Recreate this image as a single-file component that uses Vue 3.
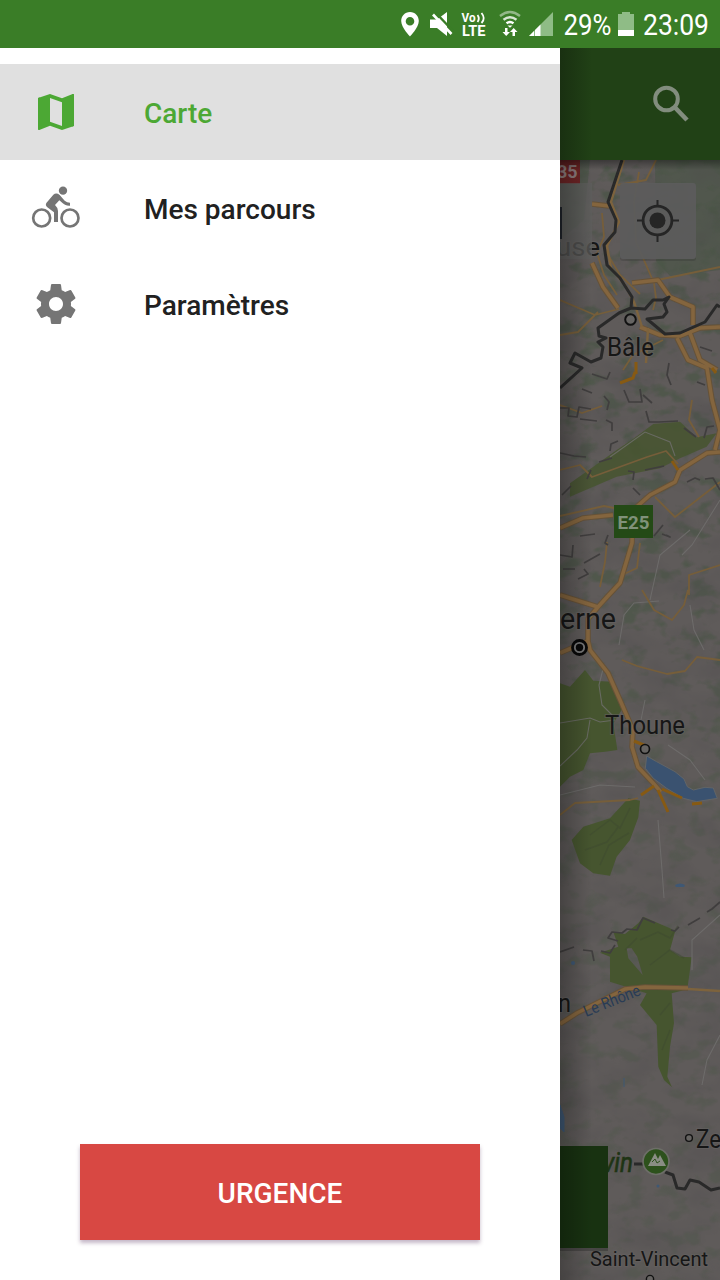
<script setup>
const items = [
  { id: 'map', label: 'Carte', active: true },
  { id: 'bike', label: 'Mes parcours', active: false },
  { id: 'settings', label: 'Paramètres', active: false },
]
</script>

<template>
  <div class="screen">
    <header class="status">
      <svg width="330" height="48" viewBox="390 0 330 48">
        <path fill="#fff" fill-rule="evenodd" d="M410 12c-5.200 0-8.800 4-8.800 9 0 6.500 8.800 15.500 8.800 15.500s8.800-9 8.800-15.500c0-5-3.600-9-8.800-9zm0 5a4.300 4.300 0 1 1 0 8.600 4.300 4.300 0 0 1 0-8.600z" />
        <path fill="#fff" d="M430 19.500h7L447 12v24l-10-8h-7z" />
        <path stroke="#3a7d27" stroke-width="2.400" d="M435.500 12.500l18 19" />
        <path stroke="#fff" stroke-width="2.600" d="M433 14.500l18.500 19.500" />
        <g fill="#fff" font-family="Roboto, sans-serif" font-weight="700">
          <text x="461.500" y="22" font-size="12.500" textLength="14" lengthAdjust="spacingAndGlyphs">Vo</text>
          <text x="462" y="36" font-size="14" textLength="23.500" lengthAdjust="spacingAndGlyphs">LTE</text>
        </g>
        <path fill="none" stroke="#fff" stroke-width="1.800" d="M477.500 15q2.500 3.500 0 7M481.500 13q4.500 5.500 0 10" />
        <g fill="none" stroke="#fff" stroke-width="2.400">
          <path stroke-opacity=".45" d="M500 16q10-8 20 0" />
          <path stroke-opacity=".8" d="M503.500 19.700q6.500-5 13 0" />
          <path d="M506.500 23.200q3.500-2.600 7 0" />
        </g>
        <path fill="#fff" d="M507.500 25.500h5l-2.500 2.300zM505 28h2.500v4h2.500l-3.800 4-3.700-4h2.500zM512.500 36h2.500v-4h2.500l-3.800-4-3.700 4h2.500z" />
        <path fill="#8fbc86" d="M553 12v24h-24z" />
        <path fill="#fff" d="M529 36l5-5v5zM535 30l5.500-5.500V36H535z" />
        <g fill="#fff" font-family="Roboto, sans-serif">
          <text x="563.500" y="35" font-size="29.500" textLength="48" lengthAdjust="spacingAndGlyphs">29%</text>
          <text x="643" y="35" font-size="29.500" textLength="66" lengthAdjust="spacingAndGlyphs">23:09</text>
        </g>
        <path fill="#8fbc86" d="M618 14h4v-2h8v2h4v16h-16z" />
        <path fill="#fff" d="M618 30h16v6h-16z" />
      </svg>
    </header>

    <div class="body">
      <nav class="drawer">
        <ul class="menu">
          <li v-for="item in items" :key="item.id" class="row" :class="{ active: item.active }">
            <span class="icon">
              <svg v-if="item.id === 'map'" width="48" height="48" viewBox="0 0 24 24">
                <path fill="currentColor" d="M20.500 3l-.16.030L15 5.100 9 3 3.360 4.900c-.21.070-.36.250-.36.480V20.500l.5.500.16-.030L9 18.900l6 2.100 5.640-1.900c.21-.070.360-.250.360-.480V3.500l-.5-.5zM15 19l-6-2.110V5l6 2.110V19z" />
                <path fill="currentColor" d="M3 5l1-.3V20.500l-1 .5zM20 3.300l1-.3v16l-1 .3z" />
              </svg>
              <svg v-else-if="item.id === 'bike'" class="bike" width="52" height="46" viewBox="90 405 156 138">
                <g fill="none" stroke="currentColor" stroke-width="8">
                  <circle cx="125" cy="504" r="25.500" />
                  <circle cx="210" cy="504" r="25.500" />
                </g>
                <circle cx="189" cy="422" r="12.500" fill="currentColor" />
                <path fill="currentColor" d="M139 459L160 434Q169 427 179 435L194 452Q201 458 210 458V467Q195 468 184 456L178 451 165 465 172 474 174 483V516H162V487L142 472Q135 466 139 459z" />
              </svg>
              <svg v-else width="48" height="48" viewBox="0 0 24 24">
                <path fill="currentColor" d="M19.430 12.980c.040-.32.070-.64.070-.98s-.030-.66-.070-.98l2.110-1.650c.19-.15.240-.42.120-.64l-2-3.460c-.12-.22-.39-.3-.61-.22l-2.490 1c-.52-.4-1.080-.73-1.690-.98l-.38-2.650C14.460 2.180 14.250 2 14 2h-4c-.25 0-.46.180-.49.420l-.38 2.650c-.61.250-1.170.590-1.690.980l-2.490-1c-.23-.090-.49 0-.61.220l-2 3.460c-.13.220-.070.490.120.640l2.110 1.650c-.040.320-.070.650-.070.980s.030.660.070.980l-2.110 1.650c-.19.150-.24.420-.12.640l2 3.460c.12.220.39.300.61.220l2.490-1c.52.400 1.080.730 1.690.980l.38 2.650c.030.240.240.420.490.420h4c.25 0 .46-.18.490-.42l.38-2.650c.61-.25 1.170-.59 1.690-.98l2.490 1c.23.090.49 0 .61-.22l2-3.460c.12-.22.070-.49-.12-.64l-2.110-1.650zM12 15.500c-1.930 0-3.500-1.570-3.500-3.500s1.570-3.500 3.500-3.500 3.500 1.570 3.500 3.500-1.570 3.500-3.500 3.500z" />
              </svg>
            </span>
            <span class="label">{{ item.label }}</span>
          </li>
        </ul>
        <button class="urgent">URGENCE</button>
      </nav>

      <main class="app">
        <div class="toolbar">
          <svg width="48" height="48" viewBox="0 0 48 48">
            <circle cx="19.500" cy="19" r="11.300" fill="none" stroke="#828d7e" stroke-width="4" />
            <path stroke="#828d7e" stroke-width="4.600" d="M27.500 27L40 40" />
          </svg>
        </div>
        <svg class="map" width="160" height="1120" viewBox="560 160 160 1120">
          <defs>
            <filter id="veg" x="0" y="0" width="1" height="1" color-interpolation-filters="sRGB">
              <feTurbulence type="fractalNoise" baseFrequency=".045 .065" numOctaves="3" seed="8" />
              <feColorMatrix values="0 0 0 0 .29  0 0 0 0 .335  0 0 0 0 .275  5 0 0 0 -2.600" />
            </filter>
            <filter id="relief" x="0" y="0" width="1" height="1" color-interpolation-filters="sRGB">
              <feTurbulence type="fractalNoise" baseFrequency=".022 .035" numOctaves="3" seed="21" />
              <feColorMatrix values="0 0 0 0 .3  0 0 0 0 .29  0 0 0 0 .3  0 3 0 0 -1.300" />
            </filter>
            <linearGradient id="edge"><stop offset="0" stop-opacity=".26" /><stop offset="1" stop-opacity="0" /></linearGradient>
            <linearGradient id="barShade" x2="0" y2="1"><stop offset="0" stop-opacity=".35" /><stop offset="1" stop-opacity="0" /></linearGradient>
            <linearGradient id="fade" x1="0" x2="0" y1="0" y2="1"><stop offset="0" stop-color="#fff" stop-opacity=".75" /><stop offset=".42" stop-color="#fff" stop-opacity=".7" /><stop offset=".58" stop-color="#fff" stop-opacity=".4" /><stop offset="1" stop-color="#fff" stop-opacity=".35" /></linearGradient>
            <mask id="vegMask" maskUnits="userSpaceOnUse" x="560" y="160" width="160" height="1120"><rect x="560" y="160" width="160" height="1120" fill="url(#fade)" /></mask>
          </defs>

          <rect x="560" y="160" width="160" height="1120" fill="#5f5b5a" />
          <path fill="#4c5649" d="M655 160h65v110l-50 6-14-15zM560 160h30l-6 60-24 20z" opacity=".75" />
          <g mask="url(#vegMask)"><rect x="560" y="160" width="160" height="1120" filter="url(#veg)" /></g>
          <rect x="560" y="160" width="160" height="1120" filter="url(#relief)" opacity=".25" />

          <!-- parks and lake -->
          <g fill="#46552f">
            <path transform="translate(550 400) scale(.3333)" opacity=".85" d="M60 250L130 200 200 150 245 120 310 72 390 65 440 112 500 100 470 140 390 175 330 205 200 230 60 290z" />
            <path transform="translate(550 590) scale(.3333)" d="M30 280L60 290 105 240 130 272 185 275 215 360 190 400 202 480 165 485 120 490 100 540 60 560 30 590z" />
            <path transform="translate(550 730) scale(.3333)" d="M235 205L270 212 265 262 240 330 200 380 180 437 130 430 90 400 65 330 100 290 180 265z" />
            <path transform="translate(550 900) scale(.3333)" fill-rule="evenodd" d="M190 95L225 102 265 70 280 50 325 70 360 85 375 95 360 150 390 170 425 172 412 268 365 280 372 370 360 440 352 530 366 562 342 540 325 500 320 375 270 315 290 280 180 245 180 170 150 158 205 140zM230 145L235 175 278 225 262 170 245 145z" />
          </g>
          <g fill="none" stroke="#3e492f" stroke-width="1.500" opacity=".5">
            <path d="M590 835l20-15 10 8 10-20M585 850l22-8 12-16M600 865l9-20 20-12M640 940l18-8 12 6 8-12M650 965l20-15 14 8M625 950l12-12M660 1015l10-12M662 1050l8-20" />
          </g>
          <path transform="translate(550 730) scale(.3333)" fill="#3a5270" stroke="#616466" stroke-width="3" d="M290 78L320 95 375 125 402 147 412 170 430 180 465 172 490 174 502 205 440 215 400 205 350 175 310 145 286 115z" />
          <g fill="#3f5874"><path d="M675 885q5-3 10 0l-1 2h-8z" /><path d="M560 1105l4 12v15l-4-4zM624 1078v9" stroke="#3f5874" /><circle cx="573" cy="963" r="2" /><circle cx="658" cy="1186" r="1.500" /></g>

          <!-- local roads -->
          <g fill="none" stroke="#706f6e" stroke-width="1.100" opacity=".8">
            <path d="M604 665l-5 20 3 20 12 12M560 723l30-5 10 4 15-2M590 720l-3 18-10 12-17 16M619 645l5-30 10-12 25-2M645 700l-4 20M610 457l35-25 25 10 5 14M690 530l-30 25-10 45M560 795l40-10 35 2M658 820l4 50 2 28M692 970v-30l28-25M720 1035l-13 25-5 25M690 605l4 25 10 20M720 500l-28 45-10 10M705 780l-15-20-22-15" />
          </g>
          <g fill="none" stroke="#765e3a" stroke-width="1.800" stroke-linejoin="round">
            <path d="M602 213l2 24-7 16 7 22 13 20M639 172l-5 30 2 40 18 41 2 15-3 12M656 160l-10 20-28 5M648 282l72-15M560 300l35 15 24-6M598 312l-20 20-18 3M663 340l-30 15-10 15" />
            <path d="M560 470l20-5 12 12 55-20 19-6 12 13M560 516l44-10 20 4M607 542l-2 20-5 25M655 497l20 20 45-35M640 543l-3 25-15 7M689 595v-20l31-10M642 590l12 20 18 10 12-15 4-15M622 660l15 6 30 8 18-3 12-14 23 3M560 815l15-12 55-3 8-2M560 405l22 8 20-7M605 250l15 25 20 19M692 400l-3 20 10 17" />
          </g>

          <!-- motorways -->
          <g v-for="pass in 2" :key="pass" fill="none" :stroke="pass === 1 ? '#665238' : '#84653e'" :stroke-width="pass === 1 ? 5.600 : 3.600" stroke-linejoin="round">
            <path d="M592 263l11 24 15 21M632 283l26-3 12 17 23 10v18M640 327l20 8 20 1 20-8 20-1M677 338l11 22 19 8 5 32 8 30-5 20M690 333l10 27 17 10M592 204l17 2" />
            <path d="M720 452l-13 1-27 17-5 12-25 13-17 15-1 33-9 30-3 10-13 14-9 10-38-12M598 607l-10 12v28M560 528l23-10 30-3M560 653l28-12 2 9 18 23 12 27 13 30-1 17 6 20 15 16 8 9" />
            <path d="M560 1024l17-11 48-24 20-2 43 1" />
          </g>
          <g fill="none" stroke="#7d633d" stroke-width="2.400">
            <path d="M624 160l-13 42 8 20-12 24 4 22 14 17 9 17 8 25M648 328l-2 35" />
            <path d="M688 989l32 2" />
          </g>
          <path fill="none" stroke="#875a13" stroke-width="3" d="M636 362v12M620 383l13-5 2-6M672 461l6 9M658 790l10 22M662 789l20 9M641 795l13-9M692 804l10-1M634 741l12 5M712 368l4 5" />

          <!-- cantonal and national borders -->
          <g fill="none" stroke="#403e3e" stroke-width="1.700" stroke-linejoin="round">
            <path d="M560 408h9l-1 8 9 1 2-10 12 2M607 410l2-8-5-6M580 419l17 2M606 420l6 3v8M646 411l3 11 10 0 19-1M684 428l12 9M704 438l3-11 7-1M560 453l14 3 12 1M599 462l13-4M587 479l4-9M562 495l9-9M610 451l1-7 7-3M633 488l7 7M628 471l6 1-1 8M645 470l19-4M687 482l8-4 5 2M705 479l8-1 7 12M580 536l15-2M608 535l-3 8 3 2M560 555l12 2 1-12M584 563l16-9M563 569l12 0M578 579l10-5-4-5M654 536l9-11M662 534l8 3-4-2" />
            <path d="M592 374l15 5 3-7M624 390l5 12h13l-2-13M669 363l-2 12 4 10M582 389l10 4M700 347l12 4M643 395l9 8M697 382l8 3" />
            <path d="M560 952l14-5M583 950l9 1 2 10M601 951l9 2 5-8M618 941l-10-3 4-6 10 1 5-4 10 1 6-12 12 5M671 930l4 1 4-4M688 925l12-7M707 912l5-3 8-7" />
          </g>
          <g fill="none" stroke="#292929" stroke-width="3" stroke-linejoin="round">
            <path d="M622 160l-14 42 8 18-1 12-11 13 3 20 13 13 12 19-1 11 14 1 8-9h10l6-3-5 7 3 8-4 5-16 2 18 15 15-1 25-11 12-17 3 2M631 308l-12 5-21 15 1 8 7 2-8 4 5 5-2 11-10 4-16-9-5 10 12 5-22 20" />
            <path d="M634 1164h9M665 1172l8 3 4 13 8 1 5-9 9 2 12 8 9-2" />
          </g>

          <!-- shields -->
          <path fill="#6c2425" d="M560 160h20v24h-20z" />
          <text x="557" y="178" font-size="18" font-weight="700" fill="#8c7b7b">35</text>
          <path fill="#244a16" d="M614 505h39v33h-39z" />
          <text x="617.500" y="528.500" font-size="18.500" font-weight="700" fill="#80927a" textLength="32" lengthAdjust="spacingAndGlyphs">E25</text>

          <!-- place names -->
          <g class="places" fill="#161616" stroke="#676463" stroke-opacity=".55" stroke-width="2" paint-order="stroke">
            <text x="556" y="256" font-size="26" textLength="44" lengthAdjust="spacingAndGlyphs">use</text>
            <text x="607" y="356" font-size="26" textLength="47" lengthAdjust="spacingAndGlyphs">Bâle</text>
            <text x="560" y="629" font-size="29" textLength="56" lengthAdjust="spacingAndGlyphs">erne</text>
            <text x="605" y="734" font-size="26" textLength="80" lengthAdjust="spacingAndGlyphs">Thoune</text>
            <text x="558" y="1012" font-size="26" textLength="13" lengthAdjust="spacingAndGlyphs">n</text>
            <text x="696" y="1148" font-size="25" textLength="25" lengthAdjust="spacingAndGlyphs">Ze</text>
            <text x="590" y="1266" font-size="21" textLength="118" lengthAdjust="spacingAndGlyphs">Saint-Vincent</text>
          </g>
          <text transform="translate(586 1017) rotate(-22)" font-size="16" fill="#293c55" textLength="60" lengthAdjust="spacingAndGlyphs">Le Rhône</text>
          <text x="603" y="1172" font-size="27" font-style="italic" fill="#1e3414" stroke="#1e3414" stroke-width=".6" textLength="30" lengthAdjust="spacingAndGlyphs">vin</text>
          <g fill="#666462" stroke="#111" stroke-width="2">
            <circle cx="630.500" cy="319.500" r="5.300" />
            <circle cx="645" cy="749" r="4.500" stroke-width="1.700" />
            <circle cx="689" cy="1138" r="3.400" stroke-width="1.400" />
            <circle cx="650" cy="1279" r="3.600" stroke-width="1.400" />
            <circle cx="579.500" cy="647.500" r="7" fill="#777" stroke="#080808" stroke-width="2.800" />
          </g>
          <circle cx="579.500" cy="647.500" r="3.700" fill="#080808" />
          <circle cx="656" cy="1161.500" r="13" fill="#2d511c" stroke="#6d6e68" stroke-width="1.700" />
          <path fill="#8a8e84" d="M648 1166l7-13 3 6 2-4 6 11z" />
          <path fill="none" stroke="#2d511c" d="M652 1162l3-3 2 4 3-2" />

          <!-- floating controls -->
          <path fill="#5d5d5c" fill-opacity=".75" d="M560 183h32v76h-32z" />
          <path fill="#20242b" d="M560 207h2v32h-2z" />
          <rect x="620" y="184" width="76" height="77" rx="3" fill="#222" opacity=".2" />
          <rect x="620" y="183" width="76" height="76" rx="3" fill="#5d5d5c" fill-opacity=".93" />
          <g fill="none" stroke="#252525" stroke-width="2.800">
            <circle cx="657.500" cy="220.500" r="14.400" />
            <path stroke-width="2" d="M657.500 200v6M657.500 235v7M637 220.500h6M672 220.500h7" />
          </g>
          <circle cx="657.500" cy="220.500" r="8" fill="#252525" />
          <path fill="#222" opacity=".35" d="M560 1248h48v3h-48z" />
          <path fill="#183211" d="M560 1146h48v102h-48z" />
          <rect x="560" y="160" width="160" height="10" fill="url(#barShade)" />
          <rect x="560" y="160" width="32" height="1120" fill="url(#edge)" />
        </svg>
      </main>
    </div>
  </div>
</template>

<style>
html,
body {
  margin: 0;
  overflow: hidden;
}
</style>

<style scoped>
.screen {
  width: 720px;
  height: 1280px;
  display: flex;
  flex-direction: column;
  background: #fff;
  font-family: Roboto, "Noto Sans", sans-serif;
}
.status {
  flex: none;
  height: 48px;
  display: flex;
  justify-content: flex-end;
  background: #3a7d27;
}
svg {
  display: block;
}
.body {
  flex: 1;
  display: grid;
  grid-template-columns: 560px 160px;
}
.drawer {
  display: flex;
  flex-direction: column;
  justify-content: space-between;
  align-items: center;
  padding: 16px 0 40px;
  box-sizing: border-box;
  background: #fff;
}
.menu {
  width: 100%;
  margin: 0;
  padding: 0;
  list-style: none;
}
.row {
  height: 96px;
  display: flex;
  align-items: center;
  padding-left: 32px;
  box-sizing: border-box;
  color: #212121;
}
.row.active {
  background: #e0e0e0;
  color: #4ca834;
}
.icon {
  width: 112px;
  flex: none;
  color: #757575;
}
.active .icon {
  color: #4ca834;
}
.bike {
  margin-left: -2px;
}
.label {
  font-size: 28px;
  line-height: 32px;
  font-weight: 500;
  padding-top: 4px;
}
.urgent {
  width: 400px;
  height: 96px;
  padding: 2px 0 0;
  border: 0;
  background: #d84843;
  color: #fff;
  font: 500 28px Roboto, "Noto Sans", sans-serif;
  box-shadow: 0 3px 4px rgba(70, 30, 80, 0.32);
}
.app {
  display: flex;
  flex-direction: column;
}
.toolbar {
  height: 112px;
  display: flex;
  align-items: center;
  justify-content: flex-end;
  padding-right: 25px;
  box-sizing: border-box;
  background: linear-gradient(90deg, #193011, #214116 32px);
}
.map text {
  font-family: Roboto, "Noto Sans", sans-serif;
}
</style>
